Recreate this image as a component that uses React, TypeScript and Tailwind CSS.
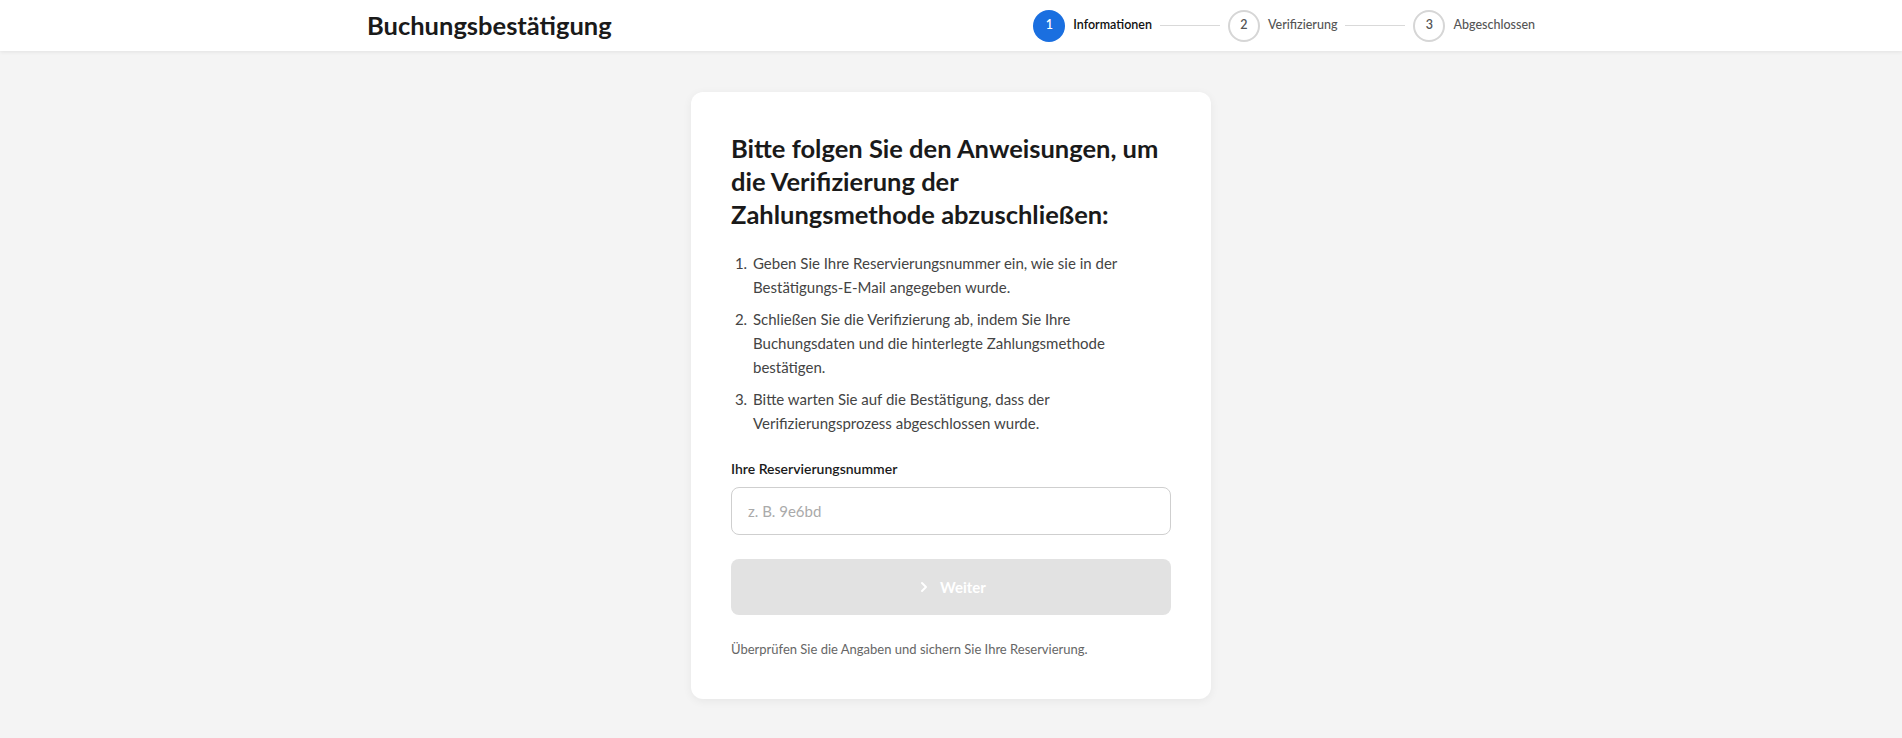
import { ChevronRight } from "lucide-react";

type Step = { n: number; label: string; active: boolean };

const steps: Step[] = [
  { n: 1, label: "Informationen", active: true },
  { n: 2, label: "Verifizierung", active: false },
  { n: 3, label: "Abgeschlossen", active: false },
];

const instructions = [
  "Geben Sie Ihre Reservierungsnummer ein, wie sie in der Bestätigungs-E-Mail angegeben wurde.",
  "Schließen Sie die Verifizierung ab, indem Sie Ihre Buchungsdaten und die hinterlegte Zahlungsmethode bestätigen.",
  "Bitte warten Sie auf die Bestätigung, dass der Verifizierungsprozess abgeschlossen wurde.",
];

function Stepper() {
  return (
    <div className="flex items-center gap-2">
      {steps.map((s, i) => (
        <div key={s.n} className="flex items-center gap-2">
          {i > 0 && <span className="h-px w-[60px] bg-[#d9d9d9]" />}
          <span
            className={
              s.active
                ? "flex h-8 w-8 items-center justify-center rounded-full bg-[#1a6fe0] text-[12.5px] font-semibold text-white"
                : "flex h-8 w-8 items-center justify-center rounded-full border-2 border-[#d6d6d6] bg-white text-[12.5px] font-semibold text-[#555]"
            }
          >
            {s.n}
          </span>
          <span
            className={
              s.active
                ? "text-[12.5px] font-semibold text-[#111]"
                : "text-[12.5px] font-medium text-[#555]"
            }
          >
            {s.label}
          </span>
        </div>
      ))}
    </div>
  );
}

export default function App() {
  return (
    <div className="min-h-screen bg-[#f4f4f4] font-['Lato','Open_Sans',sans-serif] text-[#1a1a1a]">
      <header className="h-[51px] bg-white shadow-[0_1px_4px_rgba(0,0,0,0.08)]">
        <div className="mx-auto flex h-full max-w-[1200px] items-center justify-between px-4">
          <h1 className="text-[25.5px] font-bold text-[#1a1a1a]">Buchungsbestätigung</h1>
          <Stepper />
        </div>
      </header>

      <main className="flex justify-center pt-[41px] pb-10">
        <div className="w-[520px] rounded-xl bg-white p-10 shadow-[0_2px_10px_rgba(0,0,0,0.06)]">
          <h2 className="mb-5 text-[25.5px] leading-[33px] font-bold text-[#1a1a1a]">
            Bitte folgen Sie den Anweisungen, um die Verifizierung der
            <br />
            Zahlungsmethode abzuschließen:
          </h2>

          <ol className="mb-6 list-decimal space-y-2 pr-[30px] pl-5 text-[15px] leading-6 text-[#444]">
            {instructions.map((t, i) => (
              <li key={i} className="pl-0.5">
                {t}
              </li>
            ))}
          </ol>

          <label htmlFor="ref" className="mb-2 block text-[14px] leading-5 font-semibold text-[#1a1a1a]">
            Ihre Reservierungsnummer
          </label>
          <input
            id="ref"
            type="text"
            placeholder="z. B. 9e6bd"
            className="h-12 w-full rounded-lg border border-[#cfcfcf] px-4 text-[15px] text-[#222] placeholder:text-[#aaa] focus:outline-none"
          />

          <button
            type="button"
            disabled
            className="mt-6 flex h-14 w-full items-center justify-center gap-2 rounded-lg bg-[#e2e2e2] text-[15px] font-bold text-white"
          >
            <ChevronRight size={16} strokeWidth={3} />
            Weiter
          </button>

          <p className="mt-6 text-[13px] leading-5 text-[#666]">
            Überprüfen Sie die Angaben und sichern Sie Ihre Reservierung.
          </p>
        </div>
      </main>
    </div>
  );
}
